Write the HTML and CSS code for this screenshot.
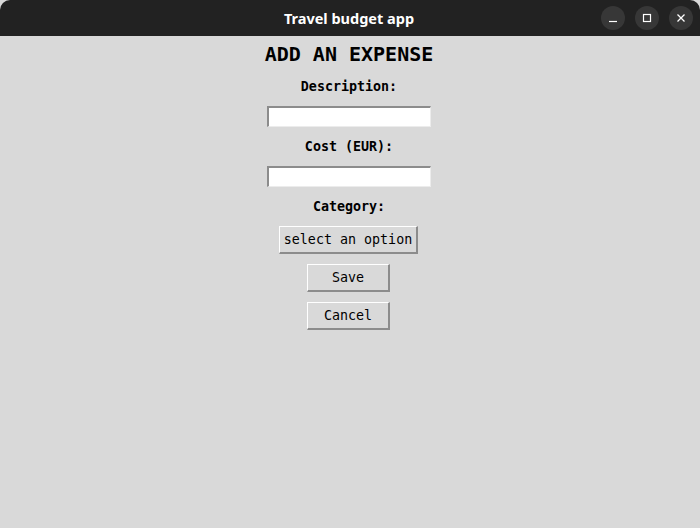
FILE: index.html
```html
<!DOCTYPE html>
<html>
<head>
<meta charset="utf-8">
<link rel="stylesheet" href="styles.css">
</head>
<body>
<div class="window">
  <header class="titlebar">
    <span class="title">Travel budget app</span>
    <div class="controls">
      <span class="ctl"><svg width="10" height="10" viewBox="0 0 10 10"><path d="M1 8.5H9" stroke="#fff" stroke-width="1.2"/></svg></span>
      <span class="ctl"><svg width="10" height="10" viewBox="0 0 10 10"><rect x="1.5" y="1.5" width="7" height="7" fill="none" stroke="#fff" stroke-width="1.2"/></svg></span>
      <span class="ctl"><svg width="10" height="10" viewBox="0 0 10 10"><path d="M1.5 1.5L8.5 8.5M8.5 1.5L1.5 8.5" stroke="#fff" stroke-width="1.3"/></svg></span>
    </div>
  </header>
  <main class="form">
    <h1 class="heading">ADD AN EXPENSE</h1>
    <label class="label">Description:</label>
    <input class="entry" type="text">
    <label class="label">Cost (EUR):</label>
    <input class="entry" type="text">
    <label class="label">Category:</label>
    <button class="btn btn-option">select an option</button>
    <button class="btn btn-small">Save</button>
    <button class="btn btn-small">Cancel</button>
  </main>
</div>
</body>
</html>
```
FILE: styles.css
```css
html, body {
  margin: 0;
  padding: 0;
  background: #d9d9d9;
}
.window {
  width: 700px;
  height: 528px;
  background: #d9d9d9;
  display: flex;
  flex-direction: column;
}
.titlebar {
  height: 36px;
  background: #222222;
  border-radius: 10px 10px 0 0;
  position: relative;
  display: flex;
  align-items: center;
  justify-content: center;
  flex-shrink: 0;
}
.title {
  color: #ffffff;
  font-family: "Noto Sans", sans-serif;
  font-weight: bold;
  font-size: 14.5px;
  letter-spacing: 0;
  padding-right: 2px;
}
.controls {
  position: absolute;
  right: 7px;
  top: 6px;
  display: flex;
  gap: 10px;
}
.ctl {
  width: 24px;
  height: 24px;
  border-radius: 50%;
  background: #373737;
  display: flex;
  align-items: center;
  justify-content: center;
}
.form {
  display: flex;
  flex-direction: column;
  align-items: center;
  font-family: "DejaVu Sans Mono", monospace;
  color: #000;
  padding-left: 0;
  padding-right: 2px;
}
.heading {
  margin: 6px 0 0 0;
  font-size: 20px;
  line-height: 24px;
  font-weight: bold;
}
.label {
  margin-top: 13px;
  font-size: 13.33px;
  line-height: 16px;
  font-weight: bold;
}
.entry {
  box-sizing: border-box;
  margin: 11px 0 0 0;
  width: 164px;
  height: 21px;
  padding: 0;
  background: #ffffff;
  border-style: solid;
  border-width: 2px 1px 1px 2px;
  border-color: #8c8c8c #ececec #ececec #8c8c8c;
  outline: none;
}
.label + .entry + .label { margin-top: 12px; }
.btn {
  box-sizing: border-box;
  margin: 10px 1px 0 0;
  height: 28px;
  padding: 0;
  background: #d9d9d9;
  border-style: solid;
  border-width: 1px 2px 2px 1px;
  border-color: #ffffff #8c8c8c #8c8c8c #ffffff;
  font-family: "DejaVu Sans Mono", monospace;
  font-size: 13.33px;
  color: #000;
}
.btn-option {
  margin-top: 11px;
  width: 139px;
}
.btn-small {
  width: 83px;
}
```
